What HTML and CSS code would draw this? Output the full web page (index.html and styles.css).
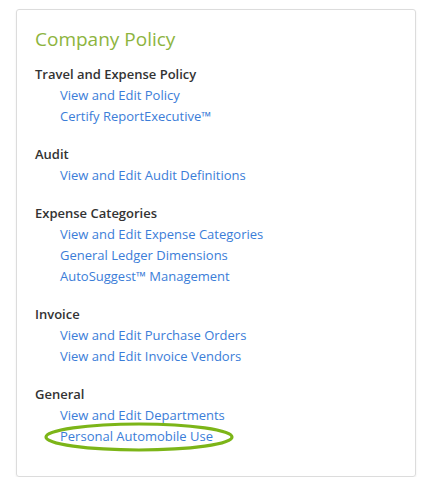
FILE: index.html
```html
<!DOCTYPE html>
<html>
<head>
<meta charset="utf-8">
<link rel="stylesheet" href="styles.css">
</head>
<body>
<div class="card">
  <h1 class="title">Company Policy</h1>
  <div class="group">
    <div class="heading">Travel and Expense Policy</div>
    <a class="link" href="#">View and Edit Policy</a>
    <a class="link" href="#">Certify ReportExecutive™</a>
  </div>
  <div class="group">
    <div class="heading">Audit</div>
    <a class="link" href="#">View and Edit Audit Definitions</a>
  </div>
  <div class="group">
    <div class="heading">Expense Categories</div>
    <a class="link" href="#">View and Edit Expense Categories</a>
    <a class="link" href="#">General Ledger Dimensions</a>
    <a class="link" href="#">AutoSuggest™ Management</a>
  </div>
  <div class="group">
    <div class="heading">Invoice</div>
    <a class="link" href="#">View and Edit Purchase Orders</a>
    <a class="link" href="#">View and Edit Invoice Vendors</a>
  </div>
  <div class="group">
    <div class="heading">General</div>
    <a class="link" href="#">View and Edit Departments</a>
    <a class="link circled" href="#">Personal Automobile Use<svg class="ring" width="192" height="32" viewBox="0 0 192 32"><ellipse cx="96" cy="16" rx="93" ry="13" fill="none" stroke="#7cb518" stroke-width="3.2"/></svg></a>
  </div>
</div>
</body>
</html>
```
FILE: styles.css
```css
html, body {
  margin: 0;
  padding: 0;
  background: #ffffff;
}
body {
  padding: 9px 9px 0 16px;
  font-family: "Open Sans", "Liberation Sans", sans-serif;
}
.card {
  width: 400px;
  height: 468px;
  box-sizing: border-box;
  border: 1px solid #dcdcdc;
  border-radius: 3px;
  box-shadow: 0 1px 2px rgba(0,0,0,0.08);
  padding: 16px 18px 0 18px;
}
.title {
  margin: 0 0 12px 0;
  font-size: 19px;
  font-weight: 400;
  line-height: 26px;
  color: #8db43e;
}
.group {
  display: flex;
  flex-direction: column;
  align-items: flex-start;
  margin-bottom: 17px;
}
.heading {
  font-size: 13px;
  font-weight: 600;
  line-height: 21px;
  color: #333333;
}
.link {
  margin-left: 25px;
  font-size: 13px;
  line-height: 21px;
  color: #3b7dd8;
  text-decoration: none;
}
.circled {
  position: relative;
}
.ring {
  position: absolute;
  left: -17px;
  top: -5px;
  pointer-events: none;
}
```
